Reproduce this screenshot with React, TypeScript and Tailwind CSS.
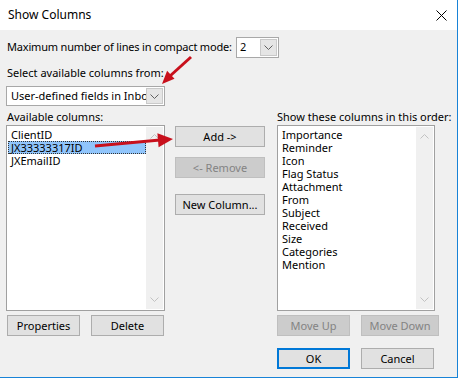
import React from "react";

const font = { fontFamily: '"Noto Sans", "Open Sans", sans-serif' };

function Chevron({ color = "#606060" }: { color?: string }) {
  return (
    <svg width="9" height="5" viewBox="0 0 9 5">
      <path d="M0.5 0.5 L4.5 4.5 L8.5 0.5" fill="none" stroke={color} strokeWidth="1" />
    </svg>
  );
}

function ChevronUp({ color = "#c2c2c2" }: { color?: string }) {
  return (
    <svg width="9" height="5" viewBox="0 0 9 5">
      <path d="M0.5 4.5 L4.5 0.5 L8.5 4.5" fill="none" stroke={color} strokeWidth="1" />
    </svg>
  );
}

function Btn({ label, w, disabled, def }: { label: string; w: string; disabled?: boolean; def?: boolean }) {
  const base = "h-[21px] flex items-center justify-center text-[11px] leading-none whitespace-nowrap";
  let cls = "";
  if (disabled) cls = "bg-[#cccccc] border border-[#bfbfbf] text-[#838383]";
  else if (def) cls = "bg-[#e1e1e1] border-2 border-[#0078d7] text-black";
  else cls = "bg-[#e1e1e1] border border-[#adadad] text-black";
  return <div className={`${base} ${cls} ${w}`}>{label}</div>;
}

function ListBox({ items, selected, w }: { items: string[]; selected?: number; w: string }) {
  return (
    <div className={`h-[186px] ${w} bg-white border border-[#a0a0a0] flex`}>
      <div className="flex-1 pt-[2px] pl-[1px]">
        {items.map((it, i) => (
          <div
            key={it}
            className={`h-[13px] leading-[13px] text-[11px] pl-[3px] whitespace-nowrap ${
              i === selected ? "bg-[#91c5fb] outline-1 outline-dotted outline-[#333] -outline-offset-1" : ""
            }`}
          >
            {it}
          </div>
        ))}
      </div>
      <div className="w-[17px] bg-[#f0f0f0] my-[1px] mr-[1px] flex flex-col items-center justify-between py-[7px]">
        <ChevronUp />
        <Chevron color="#c2c2c2" />
      </div>
    </div>
  );
}

export default function App() {
  return (
    <div
      className="w-[458px] h-[378px] bg-[#f0f0f0] border-r border-b border-[#1883d7] relative flex flex-col text-black overflow-hidden"
      style={font}
    >
      {/* Title bar */}
      <div className="h-[30px] bg-white flex items-center justify-between pl-[8px] pr-[10px] shrink-0">
        <span className="text-[12px] whitespace-nowrap">Show Columns</span>
        <svg width="11" height="11" viewBox="0 0 11 11">
          <path d="M0.5 0.5 L10.5 10.5 M10.5 0.5 L0.5 10.5" stroke="#000" strokeWidth="1" />
        </svg>
      </div>

      {/* Body */}
      <div className="flex-1 flex flex-col pl-[6px] pt-[7px]">
        <div className="flex items-center h-[21px]">
          <span className="text-[11px] tracking-[-0.18px] w-[230px] pl-[1px] whitespace-nowrap">
            Maximum number of lines in compact mode:
          </span>
          <div className="w-[43px] h-[21px] bg-white border border-[#a8a8a8] flex items-center pl-[3px] pr-[1px] text-[11px]">
            <span className="flex-1">2</span>
            <div className="w-[17px] h-[17px] bg-[#e5e5e5] border border-[#c9c9c9] flex items-center justify-center">
              <Chevron />
            </div>
          </div>
        </div>

        <div className="mt-[7px] h-[15px] text-[11px] leading-[15px] pl-[1px] whitespace-nowrap">Select available columns from:</div>

        <div className="mt-[6px] w-[159px] h-[20px] bg-white border border-[#a8a8a8] flex items-center pl-[4px] pr-[1px] text-[11px]">
          <span className="flex-1 overflow-hidden whitespace-nowrap">User-defined fields in Inbox</span>
          <div className="w-[17px] h-[16px] bg-[#e5e5e5] border border-[#c9c9c9] flex items-center justify-center shrink-0">
            <Chevron />
          </div>
        </div>

        <div className="flex mt-[3px]">
          {/* left column */}
          <div className="flex flex-col w-[159px]">
            <div className="h-[16px] text-[11px] leading-[16px] pl-[1px] whitespace-nowrap">Available columns:</div>
            <ListBox items={["ClientID", "JX33333317ID", "JXEmailID"]} selected={1} w="w-[159px]" />
            <div className="flex mt-[4px] pl-[1px] gap-[11px]">
              <Btn label="Properties" w="w-[73px]" />
              <Btn label="Delete" w="w-[73px]" />
            </div>
          </div>

          {/* middle column */}
          <div className="flex flex-col w-[90px] ml-[10px] pt-[17px]">
            <Btn label="Add ->" w="w-[90px]" />
            <div className="mt-[10px]">
              <Btn label="<- Remove" w="w-[90px]" disabled />
            </div>
            <div className="mt-[16px]">
              <Btn label="New Column..." w="w-[90px]" />
            </div>
          </div>

          {/* right column */}
          <div className="flex flex-col ml-[12px]">
            <div className="h-[16px] text-[11px] leading-[16px] whitespace-nowrap">Show these columns in this order:</div>
            <ListBox
              items={[
                "Importance",
                "Reminder",
                "Icon",
                "Flag Status",
                "Attachment",
                "From",
                "Subject",
                "Received",
                "Size",
                "Categories",
                "Mention",
              ]}
              w="w-[158px]"
            />
            <div className="flex mt-[4px] gap-[11px]">
              <Btn label="Move Up" w="w-[73px]" disabled />
              <Btn label="Move Down" w="w-[78px]" disabled />
            </div>
            <div className="flex mt-[12px] gap-[11px]">
              <Btn label="OK" w="w-[73px]" def />
              <Btn label="Cancel" w="w-[73px]" />
            </div>
          </div>
        </div>
      </div>

      {/* red annotation arrows */}
      <svg className="absolute left-0 top-0 pointer-events-none" width="458" height="378">
        <line x1="191" y1="57" x2="170" y2="76" stroke="#c8101c" strokeWidth="3" />
        <polygon points="162,84 174.5,78.8 167.1,70.8" fill="#c8101c" />
        <line x1="95" y1="146" x2="160" y2="140" stroke="#c8101c" strokeWidth="3" />
        <polygon points="173,139 158.6,147.3 157.4,133.3" fill="#c8101c" />
      </svg>
    </div>
  );
}
